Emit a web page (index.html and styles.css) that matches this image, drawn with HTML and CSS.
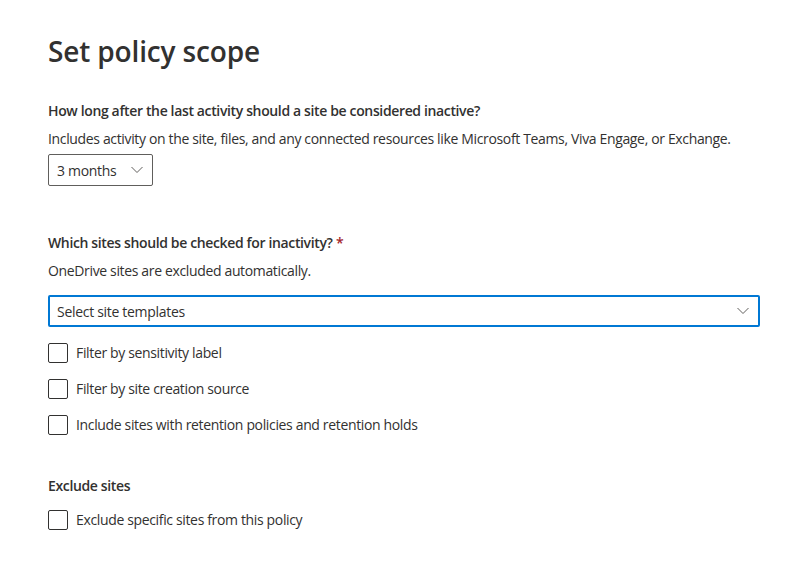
FILE: index.html
```html
<!DOCTYPE html>
<html lang="en">
<head>
<meta charset="utf-8">
<title>Set policy scope</title>
<link rel="stylesheet" href="styles.css">
</head>
<body>
<main class="page">
  <h1 class="title">Set policy scope</h1>

  <section class="field field-first">
    <div class="label">How long after the last activity should a site be considered inactive?</div>
    <div class="desc">Includes activity on the site, files, and any connected resources like Microsoft Teams, Viva Engage, or Exchange.</div>
    <div class="dropdown dropdown-small">
      <span>3 months</span>
      <svg class="chev" width="12" height="8" viewBox="0 0 12 8"><path d="M0.5 1 L6 6.5 L11.5 1" fill="none" stroke="#605e5c" stroke-width="1"/></svg>
    </div>
  </section>

  <section class="field field-second">
    <div class="label">Which sites should be checked for inactivity? <span class="req">*</span></div>
    <div class="desc">OneDrive sites are excluded automatically.</div>
    <div class="dropdown dropdown-wide">
      <span>Select site templates</span>
      <svg class="chev" width="12" height="8" viewBox="0 0 12 8"><path d="M0.5 1 L6 6.5 L11.5 1" fill="none" stroke="#605e5c" stroke-width="1"/></svg>
    </div>
    <div class="checks">
      <label class="check"><span class="box"></span><span>Filter by sensitivity label</span></label>
      <label class="check"><span class="box"></span><span>Filter by site creation source</span></label>
      <label class="check"><span class="box"></span><span>Include sites with retention policies and retention holds</span></label>
    </div>
  </section>

  <section class="field field-third">
    <div class="label">Exclude sites</div>
    <label class="check"><span class="box"></span><span>Exclude specific sites from this policy</span></label>
  </section>
</main>
</body>
</html>
```

FILE: styles.css
```css
html, body {
  margin: 0;
  padding: 0;
  background: #ffffff;
}
body {
  font-family: "Open Sans", "Noto Sans", sans-serif;
  color: #323130;
  font-size: 14px;
}
.page {
  padding: 32px 34px 0 48px;
  width: 712px;
}
.title {
  margin: 0;
  font-size: 28px;
  line-height: 38px;
  font-weight: 600;
  letter-spacing: -0.15px;
}
.field-first {
  margin-top: 31px;
}
.field-second {
  margin-top: 47px;
}
.field-third {
  margin-top: 41px;
}
.label {
  font-weight: 600;
  line-height: 20px;
  letter-spacing: -0.36px;
}
.req {
  color: #a4262c;
}
.desc {
  margin-top: 8px;
  line-height: 20px;
  letter-spacing: -0.35px;
}
.dropdown {
  margin-top: 5px;
  box-sizing: border-box;
  height: 32px;
  border: 1px solid #605e5c;
  border-radius: 2px;
  display: flex;
  align-items: center;
  justify-content: space-between;
  padding: 0 9px 0 8px;
  letter-spacing: -0.3px;
}
.dropdown-small {
  width: 105px;
}
.dropdown-wide {
  margin-top: 14px;
  width: 712px;
  border: 2px solid #0078d4;
  padding: 0 9px 0 7px;
}
.checks {
  margin-top: 16px;
  display: flex;
  flex-direction: column;
  gap: 16px;
}
.check {
  display: flex;
  align-items: center;
  gap: 8px;
  line-height: 20px;
  letter-spacing: -0.35px;
}
.field-third .check {
  margin-top: 14px;
}
.box {
  width: 20px;
  height: 20px;
  box-sizing: border-box;
  border: 1px solid #323130;
  border-radius: 2px;
  flex: none;
}
```
